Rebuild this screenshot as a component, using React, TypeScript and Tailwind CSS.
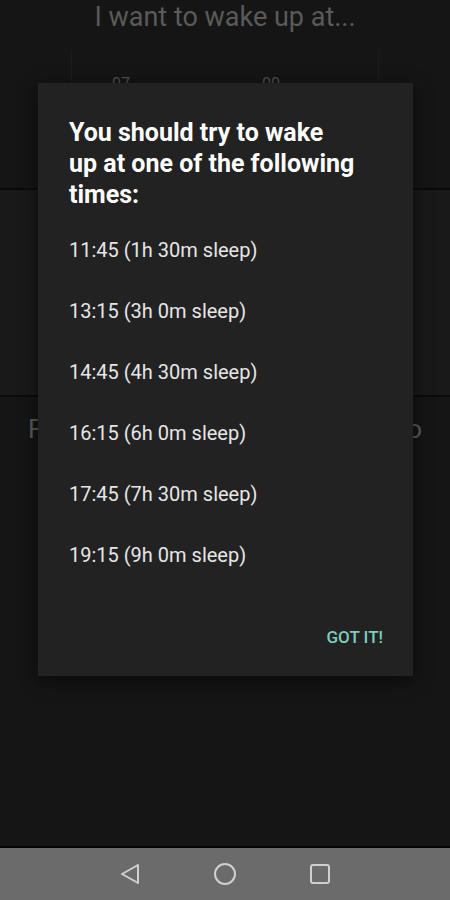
import React from "react";

const times = [
  "11:45 (1h 30m sleep)",
  "13:15 (3h 0m sleep)",
  "14:45 (4h 30m sleep)",
  "16:15 (6h 0m sleep)",
  "17:45 (7h 30m sleep)",
  "19:15 (9h 0m sleep)",
];

export default function App() {
  return (
    <div
      className="relative w-[450px] h-[900px] overflow-hidden bg-[#151515] flex flex-col"
      style={{ fontFamily: "Roboto, 'Noto Sans', sans-serif" }}
    >
      {/* background screen */}
      <div className="flex-1 flex flex-col">
        <div className="h-[50px] flex justify-center pt-[1px]">
          <span className="text-[27px] leading-[32px] text-[#5a5a5a]">I want to wake up at...</span>
        </div>
        <div className="h-[138px] flex justify-center">
          <div className="w-[308px] border-x border-[#1c1c1c] flex pt-[22px]">
            <span className="ml-[40px] text-[16px] text-[#505050]">07</span>
            <span className="ml-[132px] text-[16px] text-[#505050]">00</span>
          </div>
        </div>
        <div className="h-[2px] bg-[#0b0b0b]" />
        <div className="h-[205px] bg-[#191919]" />
        <div className="h-[2px] bg-[#0b0b0b]" />
        <div className="flex justify-between px-[28px] pt-[16px]">
          <span className="text-[26px] leading-[32px] text-[#5a5a5a]">F</span>
          <span className="text-[26px] leading-[32px] text-[#5a5a5a]">o</span>
        </div>
        <div className="flex-1" />
        <div className="h-[2px] bg-[#050505]" />
      </div>

      {/* nav bar */}
      <div className="h-[52px] bg-[#6b6b6b] flex items-center justify-center gap-[72px]">
        <svg width="22" height="22" viewBox="0 0 22 22" fill="none" stroke="#cfcfcf" strokeWidth="2" strokeLinejoin="round">
          <path d="M19 2 L3 11 L19 20 Z" />
        </svg>
        <svg width="24" height="24" viewBox="0 0 24 24" fill="none" stroke="#cfcfcf" strokeWidth="2">
          <circle cx="12" cy="12" r="10" />
        </svg>
        <svg width="22" height="22" viewBox="0 0 22 22" fill="none" stroke="#cfcfcf" strokeWidth="2">
          <rect x="2" y="2" width="18" height="18" rx="2" />
        </svg>
      </div>

      {/* dialog overlay */}
      <div className="absolute left-[38px] top-[83px] w-[375px] h-[593px] bg-[#222222] shadow-[0_4px_16px_rgba(0,0,0,0.6)] flex flex-col">
        <div className="pl-[31px] pt-[34px]">
          <p className="text-[25px] leading-[31px] font-bold text-white whitespace-nowrap">
            You should try to wake
            <br />
            up at one of the following
            <br />
            times:
          </p>
        </div>
        <div className="flex flex-col pl-[31px] pt-[28px] gap-[37px]">
          {times.map((t) => (
            <span key={t} className="text-[20px] leading-[24px] text-[#e6e6e6]">
              {t}
            </span>
          ))}
        </div>
        <div className="flex-1" />
        <div className="flex justify-end pr-[30px] pb-[29px]">
          <span className="text-[17px] leading-[20px] font-medium text-[#7fcdbf]">GOT IT!</span>
        </div>
      </div>
    </div>
  );
}
